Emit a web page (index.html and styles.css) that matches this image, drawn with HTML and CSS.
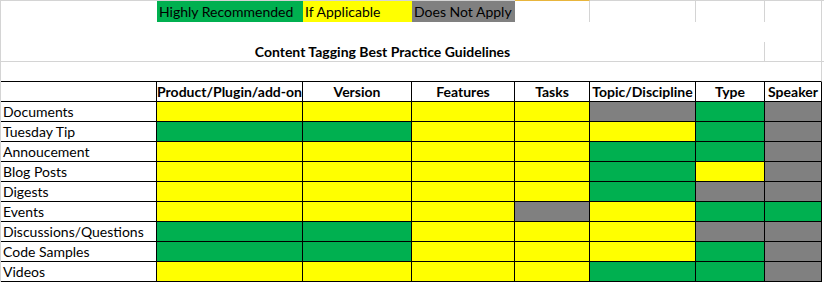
FILE: index.html
```html
<!DOCTYPE html>
<html>
<head>
<meta charset="utf-8">
<title>Content Tagging Best Practice Guidelines</title>
<link rel="stylesheet" href="styles.css">
</head>
<body>
<div class="sheet">
  <!-- row 1: legend -->
  <div class="c r1"></div>
  <div class="c r1 g">Highly Recommended</div>
  <div class="c r1 y">If Applicable</div>
  <div class="c r1 x">Does Not Apply</div>
  <div class="c r1 sel gr"></div>
  <div class="c r1 gr"></div>
  <div class="c r1 gr"></div>
  <div class="c r1 gr"></div>
  <div class="c r1"></div>

  <!-- row 2 -->
  <div class="c span7"></div>
  <div class="c gr"></div>
  <div class="c"></div>

  <!-- row 3: title -->
  <div class="c span7 gr gb title">Content Tagging Best Practice Guidelines</div>
  <div class="c gr gb"></div>
  <div class="c gb"></div>

  <!-- row 4 -->
  <div class="c span7 kb"></div>
  <div class="c gr kb"></div>
  <div class="c"></div>

  <!-- row 5: header -->
  <div class="c t"></div>
  <div class="c t hd">Product/Plugin/add-on</div>
  <div class="c t hd">Version</div>
  <div class="c t hd">Features</div>
  <div class="c t hd">Tasks</div>
  <div class="c t hd">Topic/Discipline</div>
  <div class="c t hd">Type</div>
  <div class="c t hd">Speaker</div>
  <div class="c"></div>

  <div class="c t">Documents</div>
  <div class="c t y"></div><div class="c t y"></div><div class="c t y"></div><div class="c t y"></div><div class="c t x"></div><div class="c t g"></div><div class="c t x"></div>
  <div class="c"></div>

  <div class="c t">Tuesday Tip</div>
  <div class="c t g"></div><div class="c t g"></div><div class="c t y"></div><div class="c t y"></div><div class="c t y"></div><div class="c t g"></div><div class="c t x"></div>
  <div class="c"></div>

  <div class="c t">Annoucement</div>
  <div class="c t y"></div><div class="c t y"></div><div class="c t y"></div><div class="c t y"></div><div class="c t g"></div><div class="c t g"></div><div class="c t x"></div>
  <div class="c"></div>

  <div class="c t">Blog Posts</div>
  <div class="c t y"></div><div class="c t y"></div><div class="c t y"></div><div class="c t y"></div><div class="c t g"></div><div class="c t y"></div><div class="c t x"></div>
  <div class="c"></div>

  <div class="c t">Digests</div>
  <div class="c t y"></div><div class="c t y"></div><div class="c t y"></div><div class="c t y"></div><div class="c t g"></div><div class="c t x"></div><div class="c t x"></div>
  <div class="c"></div>

  <div class="c t">Events</div>
  <div class="c t y"></div><div class="c t y"></div><div class="c t y"></div><div class="c t x"></div><div class="c t y"></div><div class="c t g"></div><div class="c t g"></div>
  <div class="c"></div>

  <div class="c t">Discussions/Questions</div>
  <div class="c t g"></div><div class="c t g"></div><div class="c t y"></div><div class="c t y"></div><div class="c t y"></div><div class="c t x"></div><div class="c t x"></div>
  <div class="c"></div>

  <div class="c t">Code Samples</div>
  <div class="c t g"></div><div class="c t g"></div><div class="c t y"></div><div class="c t y"></div><div class="c t y"></div><div class="c t g"></div><div class="c t x"></div>
  <div class="c"></div>

  <div class="c t">Videos</div>
  <div class="c t y"></div><div class="c t y"></div><div class="c t y"></div><div class="c t y"></div><div class="c t g"></div><div class="c t g"></div><div class="c t x"></div>
  <div class="c"></div>
</div>
</body>
</html>
```

FILE: styles.css
```css
html, body {
  margin: 0;
  padding: 0;
  background: #ffffff;
}

body {
  font-family: Lato, "Liberation Sans", sans-serif;
  font-size: 14px;
  color: #000000;
}

.sheet {
  display: grid;
  grid-template-columns: 156px 146px 109px 103px 75px 106px 69px 57px 1fr;
  grid-template-rows: 22px repeat(13, 20px);
  width: 823px;
  border-left: 1px solid #d4d4d4;
}

.c {
  box-sizing: border-box;
  display: flex;
  align-items: flex-end;
  min-width: 0;
  padding: 0 2px 2px 2px;
  line-height: 15px;
  white-space: nowrap;
}

.r1 {
  border-top: 1px solid #d4d4d4;
  padding-bottom: 3px;
}

.r1.sel {
  border-top-color: #e8b53c;
}

.span7 {
  grid-column: 1 / 8;
}

.gr {
  border-right: 1px solid #d4d4d4;
}

.gb {
  border-bottom: 1px solid #d4d4d4;
}

.kb {
  border-bottom: 1px solid #000000;
}

.t {
  border-right: 1px solid #000000;
  border-bottom: 1px solid #000000;
}

.title {
  justify-content: center;
  font-weight: bold;
}

.hd {
  justify-content: center;
  font-weight: bold;
}

.g { background: #00b050; }
.y { background: #ffff00; }
.x { background: #808080; }
```
